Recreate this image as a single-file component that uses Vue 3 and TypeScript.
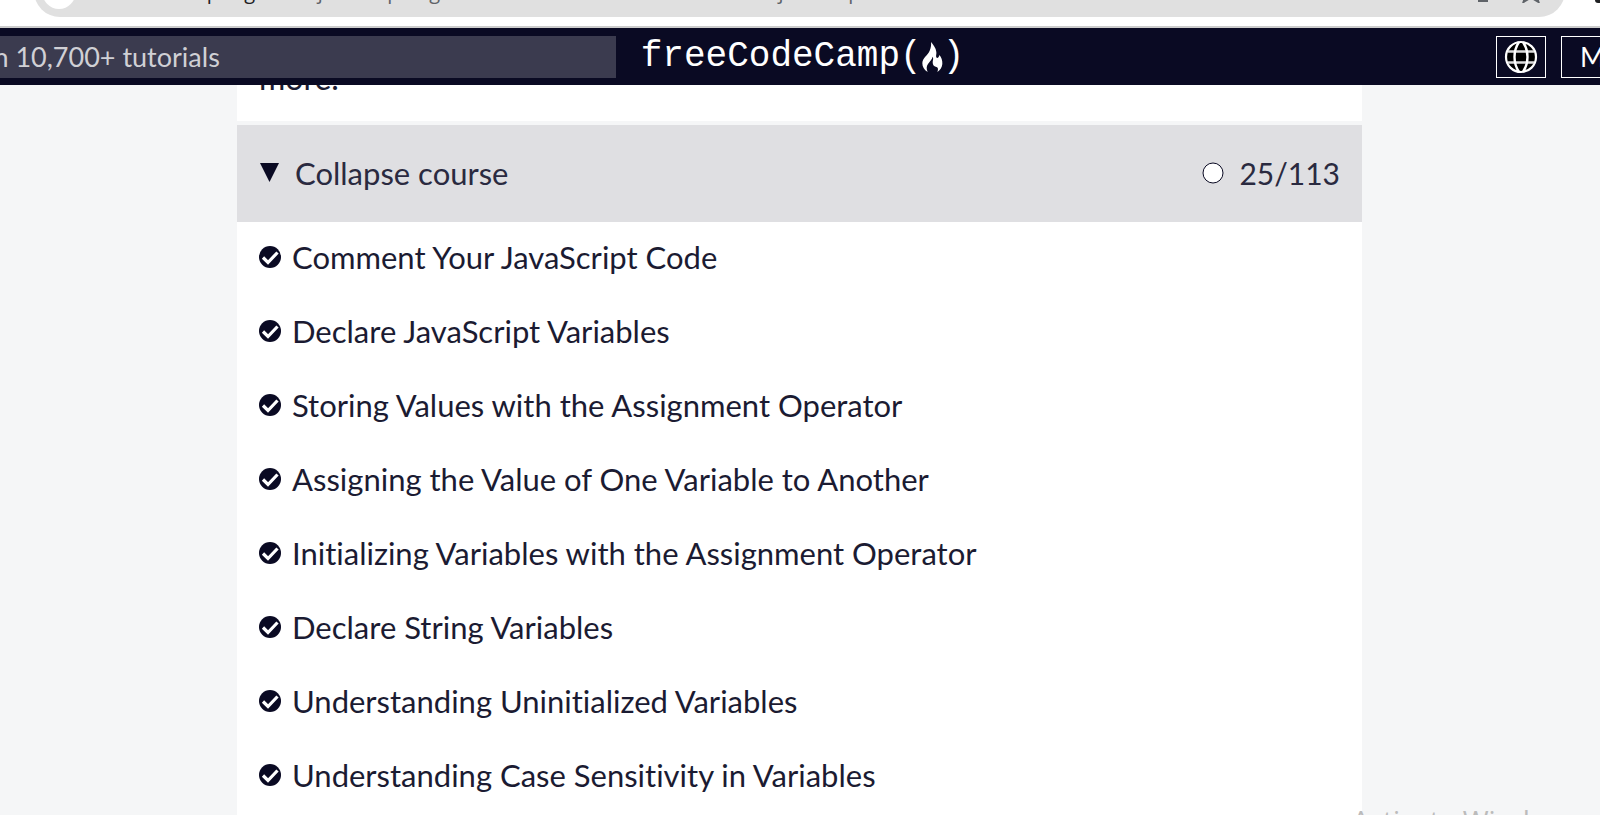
<script setup lang="ts">
import { ref } from 'vue'

const expanded = ref(true)
const query = ref('')
const address = 'freecodecamp.org'
const addressPath = '/learn/javascript-algorithms-and-data-structures/#basic-javascript'
const completed = 25
const total = 113
const lessons: string[] = [
  'Comment Your JavaScript Code',
  'Declare JavaScript Variables',
  'Storing Values with the Assignment Operator',
  'Assigning the Value of One Variable to Another',
  'Initializing Variables with the Assignment Operator',
  'Declare String Variables',
  'Understanding Uninitialized Variables',
  'Understanding Case Sensitivity in Variables',
]
</script>

<template>
  <div class="screen">
    <div class="browser">
      <div class="address">
        <span class="site-badge"></span>
        <span class="url"><b>{{ address }}</b>{{ addressPath }}</span>
        <svg class="tool" viewBox="0 0 24 24" aria-hidden="true">
          <path d="M12 2v14M7 11l5 5 5-5" fill="none" stroke="#5f6368" stroke-width="2" />
          <path d="M7 20h10v3H7z" fill="#5f6368" />
        </svg>
        <svg class="tool" viewBox="0 0 24 24" aria-hidden="true">
          <path d="M12 2l3 7.500 8 .6-6 5.200L19.500 23 12 18.500 4.500 23 7 15.300 1 10.100 9 9.500z" fill="none" stroke="#5f6368" stroke-width="2" />
        </svg>
      </div>
      <span class="extension"></span>
    </div>

    <header class="nav">
      <input v-model="query" class="search" type="search" aria-label="Search tutorials" placeholder="Search 10,700+ tutorials" />
      <a class="logo" href="#" aria-label="freeCodeCamp">
        <span>freeCodeCamp(</span>
        <svg class="flame" viewBox="0 0 61 90" aria-hidden="true">
          <path d="M26 0C32 8 41 18 42 30C43 36 40 42 42 46C44 50 50 47 51 39C57 45 61 56 60 66C59 77 53 85 45 90C49 80 47 75 40 74C31 72 30 62 32 54C33 49 32 46 31 44C29 52 22 59 17 66C12 72 12 81 16 90C5 84 0 74 0 64C0 48 16 40 22 26C26 17 27 8 26 0Z" fill="#fff" />
        </svg>
        <span>)</span>
      </a>
      <div class="actions">
        <button class="language" type="button" aria-label="Change language">
          <svg viewBox="0 0 34 34" aria-hidden="true">
            <circle cx="17" cy="17" r="15" fill="#000" stroke="#fff" stroke-width="2.200" />
            <path d="M4 11.500h26M4 22.500h26" stroke="#ddd" stroke-width="2.600" />
            <path d="M15 2C9 11 9 23 15 32M19 2C25 11 25 23 19 32" fill="none" stroke="#fff" stroke-width="2.400" />
          </svg>
        </button>
        <button class="menu" type="button">Menu</button>
      </div>
    </header>

    <main class="page">
      <section class="block">
        <p class="intro">more.</p>
        <button class="toggle" type="button" :aria-expanded="expanded" @click="expanded = !expanded">
          <svg class="arrow" viewBox="0 0 20 20" aria-hidden="true"><path d="M0 0h19L9.500 19z" fill="#0a0a23" /></svg>
          <span>{{ expanded ? 'Collapse' : 'Expand' }} course</span>
          <svg class="progress" viewBox="0 0 22 22" aria-hidden="true">
            <circle cx="11" cy="11" r="10" fill="#fff" stroke="#0a0a23" />
          </svg>
          <span class="count">{{ completed }}/{{ total }}</span>
        </button>
        <ul v-if="expanded" class="lessons">
          <li v-for="lesson in lessons" :key="lesson">
            <a href="#">
              <svg class="check" viewBox="0 0 22 22" aria-hidden="true">
                <circle cx="11" cy="11" r="11" fill="#0a0a23" />
                <path d="M4 11.500l5 5 9.500-10" fill="none" stroke="#fff" stroke-width="3.200" />
              </svg>
              <span>{{ lesson }}</span>
            </a>
          </li>
        </ul>
      </section>
    </main>
    <div class="watermark">Activate Windows</div>
  </div>
</template>

<style>
body {
  margin: 0;
  background: #f5f6f7;
}
</style>

<style scoped>
.screen {
  position: relative;
  height: 100vh;
  overflow: hidden;
  background: #f5f6f7;
  color: #1b1b32;
  font-family: Lato, 'Liberation Sans', sans-serif;
  font-size: 31px;
  font-variant-ligatures: none;
}
.browser {
  display: flex;
  align-items: flex-end;
  justify-content: space-between;
  box-sizing: border-box;
  height: 28px;
  padding: 0 0 9px 34px;
  border-bottom: 2px solid #ccc;
  background: #fff;
}
.address {
  display: flex;
  flex: 1;
  align-items: center;
  gap: 24px;
  box-sizing: border-box;
  height: 52px;
  margin-right: 30px;
  padding: 0 22px 0 8px;
  border-radius: 26px;
  background: #e0e0e0;
}
.site-badge {
  width: 34px;
  height: 36px;
  margin-right: -15px;
  border-radius: 50%;
  background: #fff;
}
.url {
  flex: 1;
  color: #5f6368;
  font-family: 'Open Sans', 'Noto Sans', sans-serif;
  font-size: 20px;
  white-space: nowrap;
}
.url b {
  color: #202124;
  font-weight: 400;
}
.tool {
  width: 24px;
  height: 24px;
}
.extension {
  align-self: flex-start;
  width: 5px;
  height: 3px;
  border-radius: 0 0 0 3px;
  background: #202124;
}
.nav {
  display: grid;
  grid-template-columns: minmax(0, 1fr) auto minmax(0, 1fr);
  align-items: center;
  position: relative;
  height: 57px;
  margin: 0 -100px;
  background: #0a0a23;
}
.search {
  box-sizing: border-box;
  width: 100%;
  height: 42px;
  padding: 0 29px;
  border: 0;
  border-radius: 0;
  background: #3b3b4f;
  color: #fff;
  font: 27px Lato, sans-serif;
}
.search::placeholder {
  color: #d0d0d5;
  opacity: 1;
}
.logo {
  display: flex;
  align-items: center;
  margin: 0 20px 0 25px;
  color: #fff;
  font: 36px/42px 'Liberation Mono', monospace;
  text-decoration: none;
}
.flame {
  width: 21px;
  height: 30px;
}
.actions {
  display: flex;
  justify-content: flex-end;
  gap: 15px;
}
.language,
.menu {
  box-sizing: border-box;
  height: 42px;
  border: 1px solid #fff;
  background: #0a0a23;
  color: #fff;
  font: 27px Lato, sans-serif;
}
.language {
  display: grid;
  place-items: center;
  width: 50px;
  padding: 0;
}
.language svg {
  width: 34px;
  height: 34px;
}
.menu {
  width: 139px;
  padding: 0 18px;
  text-align: left;
}
.page {
  display: flex;
  justify-content: center;
  padding-right: 1px;
}
.block {
  width: 1125px;
  max-width: 100%;
}
.intro {
  margin: -25px 0 4px;
  padding: 0 22px 25px;
  background: #fff;
  font-size: 32px;
  line-height: 36px;
}
.toggle {
  display: flex;
  align-items: center;
  width: 100%;
  height: 97px;
  padding: 0 22px 2px 23px;
  border: 0;
  background: #dfdfe2;
  color: #2a2a40;
  font: inherit;
}
.arrow {
  width: 20px;
  height: 20px;
  margin-right: 15px;
}
.progress {
  width: 22px;
  height: 22px;
  margin: 0 15px 0 auto;
}
.count {
  font-size: 30px;
}
.lessons {
  margin: 0;
  padding: 0 0 20px;
  list-style: none;
  background: #fff;
}
.lessons a {
  display: flex;
  align-items: center;
  gap: 11px;
  box-sizing: border-box;
  height: 74px;
  padding: 0 22px 4px;
  color: #1b1b32;
  text-decoration: none;
}
.check {
  width: 22px;
  height: 22px;
}
.watermark {
  position: absolute;
  top: 804px;
  left: 1352px;
  color: #bbb;
  font: 28px/32px 'Open Sans', sans-serif;
}
</style>
